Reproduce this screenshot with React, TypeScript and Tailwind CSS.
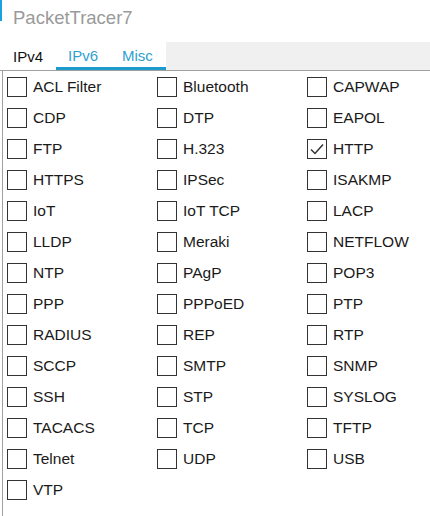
const protocols = [
  "ACL Filter", "Bluetooth", "CAPWAP",
  "CDP", "DTP", "EAPOL",
  "FTP", "H.323", "HTTP",
  "HTTPS", "IPSec", "ISAKMP",
  "IoT", "IoT TCP", "LACP",
  "LLDP", "Meraki", "NETFLOW",
  "NTP", "PAgP", "POP3",
  "PPP", "PPPoED", "PTP",
  "RADIUS", "REP", "RTP",
  "SCCP", "SMTP", "SNMP",
  "SSH", "STP", "SYSLOG",
  "TACACS", "TCP", "TFTP",
  "Telnet", "UDP", "USB",
  "VTP",
];

const checked = ["HTTP"];

const FilterBox = ({ label, isChecked }: { label: string; isChecked: boolean }) => (
  <label className="flex h-[31px] items-center gap-[6px]">
    <span className="flex h-[20px] w-[20px] shrink-0 items-center justify-center border border-[#333333] bg-white">
      {isChecked && (
        <svg width="18" height="18" viewBox="0 0 18 18" fill="none">
          <path d="M3 9.5 L7 13.5 L15 4.5" stroke="#333333" strokeWidth="1.5" />
        </svg>
      )}
    </span>
    <span className="text-[15.5px] leading-none text-[#1a1a1a]">{label}</span>
  </label>
);

export default function App() {
  return (
    <div className="h-[516px] w-[430px] overflow-hidden bg-white font-['Liberation_Sans',Arial,sans-serif]">
      <div className="flex h-[42px] items-start">
        <div className="h-[21px] w-[2px] bg-[#1ba1e2]" />
        <div className="pl-[11px] pt-[5px] text-[18.5px] leading-[26px] text-[#9a9a9a]">
          PacketTracer7
        </div>
      </div>

      <div className="flex h-[29px] border-b border-[#a0a0a0]">
        <div className="flex w-[56px] items-center pl-[13px] pt-[2px] text-[15px] text-[#111111]">
          IPv4
        </div>
        <div className="flex w-[110px] items-center gap-[24px] border-b-[3px] border-[#1e9bcd] pl-[12px] pt-[3px] text-[15px] text-[#2f9fcf]">
          <span>IPv6</span>
          <span>Misc</span>
        </div>
        <div className="flex-1 bg-[#f0f0f0]" />
      </div>

      <div className="ml-[2px] h-full border-l border-[#a0a0a0] pl-[4px]">
        <div className="grid grid-cols-[150px_150px_1fr]">
          {protocols.map((p) => (
            <FilterBox key={p} label={p} isChecked={checked.includes(p)} />
          ))}
        </div>
      </div>
    </div>
  );
}
